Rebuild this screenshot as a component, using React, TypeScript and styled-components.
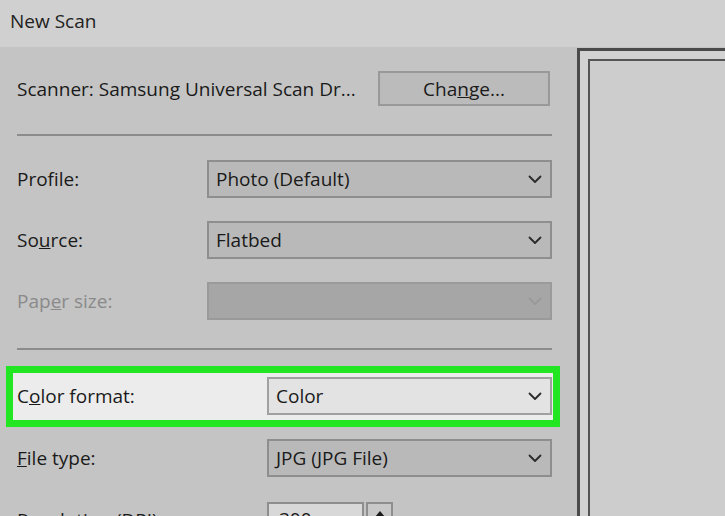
import { createGlobalStyle, styled } from 'styled-components';

const GlobalStyle = createGlobalStyle`
  html, body {
    margin: 0;
    padding: 0;
    overflow: hidden;
  }

  body {
    font-family: 'Open Sans', 'Noto Sans', 'Liberation Sans', sans-serif;
    color: #1a1a1a;
  }
`;

interface FieldProps {
  label: React.ReactNode;
  value?: string;
  labelWidth: number;
  disabled?: boolean;
  light?: boolean;
}

const Chevron = ({ disabled }: { disabled?: boolean }) => (
  <S.ChevronSvg width="14" height="9" viewBox="0 0 14 9" $disabled={disabled}>
    <path d="M1.5 1.5 L7 7 L12.5 1.5" fill="none" strokeWidth="1.8" strokeLinecap="round" strokeLinejoin="round" />
  </S.ChevronSvg>
);

const Field = ({ label, value, labelWidth, disabled, light }: FieldProps) => (
  <S.FieldRow $labelWidth={labelWidth}>
    <S.Label $disabled={disabled}>{label}</S.Label>
    <S.Select $disabled={disabled} $light={light}>
      <S.SelectValue>{value}</S.SelectValue>
      <Chevron disabled={disabled} />
    </S.Select>
  </S.FieldRow>
);

const App = () => (
  <>
    <GlobalStyle />
    <S.Window>
      <S.TitleBar>New Scan</S.TitleBar>
      <S.Body>
        <S.SettingsPane>
          <S.ScannerRow>
            <S.ScannerName>Scanner: Samsung Universal Scan Dr...</S.ScannerName>
            <S.Button>
              Cha<u>n</u>ge...
            </S.Button>
          </S.ScannerRow>
          <S.Separator $below={24} />
          <S.Group>
            <Field labelWidth={190} label={<>Prof<u>i</u>le:</>} value="Photo (Default)" />
            <Field labelWidth={190} label={<>So<u>u</u>rce:</>} value="Flatbed" />
            <Field labelWidth={190} label={<>Pap<u>e</u>r size:</>} disabled />
          </S.Group>
          <S.Separator $below={16} />
          <S.Highlight>
            <Field labelWidth={250} label={<>C<u>o</u>lor format:</>} value="Color" light />
          </S.Highlight>
          <S.Group>
            <Field labelWidth={250} label={<><u>F</u>ile type:</>} value="JPG (JPG File)" />
            <S.SpinnerRow $labelWidth={250}>
              <S.SpinnerLabel>
                <u>R</u>esolution (DPI):
              </S.SpinnerLabel>
              <S.Spinner>
                <S.SpinnerInput>300</S.SpinnerInput>
                <S.SpinnerButton>
                  <svg width="12" height="8" viewBox="0 0 12 8">
                    <path d="M6 1 L11 7 L1 7 Z" fill="#1a1a1a" />
                  </svg>
                </S.SpinnerButton>
              </S.Spinner>
            </S.SpinnerRow>
          </S.Group>
        </S.SettingsPane>
        <S.PreviewPane>
          <S.PreviewArea />
        </S.PreviewPane>
      </S.Body>
    </S.Window>
  </>
);

export default App;

const Window = styled.div`
  display: flex;
  flex-direction: column;

  width: 725px;
  height: 516px;
  overflow: hidden;

  background: #c4c4c4;
`;

const TitleBar = styled.div`
  display: flex;
  align-items: center;
  flex-shrink: 0;

  height: 47px;
  padding: 0 0 6px 10px;
  box-sizing: border-box;

  background: #d0d0d0;

  font-size: 19px;
  color: #222;
`;

const Body = styled.div`
  display: flex;
  flex: 1;
  min-height: 0;
`;

const SettingsPane = styled.div`
  display: flex;
  flex-direction: column;
  flex-shrink: 0;

  width: 577px;
  padding: 24px 25px 0 17px;
  box-sizing: border-box;

  & > * {
    flex-shrink: 0;
  }
`;

const ScannerRow = styled.div`
  display: flex;
  justify-content: space-between;
  align-items: center;

  height: 35px;
  padding-right: 2px;
`;

const ScannerName = styled.span`
  font-size: 19px;
  white-space: nowrap;
`;

const Button = styled.div`
  display: flex;
  justify-content: center;
  align-items: center;

  width: 172px;
  height: 35px;
  box-sizing: border-box;
  border: 2px solid #999;

  background: #bbbbbb;

  font-size: 19px;
`;

const Separator = styled.div<{ $below: number }>`
  height: 2px;
  margin: 28px 0 ${({ $below }) => `${$below}px`} 0;

  background: #8c8c8c;
`;

const Group = styled.div`
  display: flex;
  flex-direction: column;
  gap: 23px;
`;

const FieldRow = styled.div<{ $labelWidth: number }>`
  display: grid;
  grid-template-columns: ${({ $labelWidth }) => `${$labelWidth}px`} 1fr;
  align-items: center;

  height: 38px;
`;

const SpinnerRow = styled(FieldRow)`
  align-items: start;

  margin-top: 2px;
`;

const Label = styled.span<{ $disabled?: boolean }>`
  font-size: 19px;
  white-space: nowrap;
  color: ${({ $disabled }) => ($disabled ? '#8a8a8a' : '#1a1a1a')};
`;

const SpinnerLabel = styled(Label)`
  padding-top: 5px;
`;

const Select = styled.div<{ $disabled?: boolean; $light?: boolean }>`
  display: flex;
  justify-content: space-between;
  align-items: center;

  height: 38px;
  padding: 0 8px 0 7px;
  box-sizing: border-box;
  border: 2px solid ${({ $disabled, $light }) => ($light ? '#a0a0a0' : $disabled ? '#9a9a9a' : '#8e8e8e')};

  background: ${({ $disabled, $light }) => ($light ? '#e3e3e3' : $disabled ? '#a6a6a6' : '#b9b9b9')};
`;

const SelectValue = styled.span`
  font-size: 19px;
  white-space: nowrap;
`;

const ChevronSvg = styled.svg<{ $disabled?: boolean }>`
  flex-shrink: 0;

  stroke: ${({ $disabled }) => ($disabled ? '#999' : '#2a2a2a')};
`;

const Highlight = styled.div`
  margin: 0 -8px 12px -11px;
  padding: 4px 1px 5px 4px;
  border: 7px solid #22e622;

  background: #ececec;
`;

const Spinner = styled.div`
  display: flex;
  align-items: flex-start;
  gap: 2px;
`;

const SpinnerInput = styled.div`
  width: 97px;
  height: 38px;
  padding: 0 10px;
  box-sizing: border-box;
  border: 2px solid #8e8e8e;

  background: #d8d8d8;

  font-size: 19px;
  line-height: 30px;
`;

const SpinnerButton = styled.div`
  display: flex;
  justify-content: center;
  padding-top: 6px;

  width: 27px;
  height: 20px;
  box-sizing: border-box;
  border: 2px solid #8e8e8e;

  background: #c8c8c8;
`;

const PreviewPane = styled.div`
  flex: 1;

  margin-top: 1px;
  padding: 8px 0 0 8px;
  border-top: 3px solid #4a4a4a;
  border-left: 3px solid #4a4a4a;

  background: #d2d2d2;
`;

const PreviewArea = styled.div`
  height: 100%;
  border-top: 2px solid #555;
  border-left: 2px solid #555;

  background: #cdcdcd;
`;

const S = {
  Window,
  TitleBar,
  Body,
  SettingsPane,
  ScannerRow,
  ScannerName,
  Button,
  Separator,
  Group,
  FieldRow,
  SpinnerRow,
  Label,
  SpinnerLabel,
  Select,
  SelectValue,
  ChevronSvg,
  Highlight,
  Spinner,
  SpinnerInput,
  SpinnerButton,
  PreviewPane,
  PreviewArea,
};
